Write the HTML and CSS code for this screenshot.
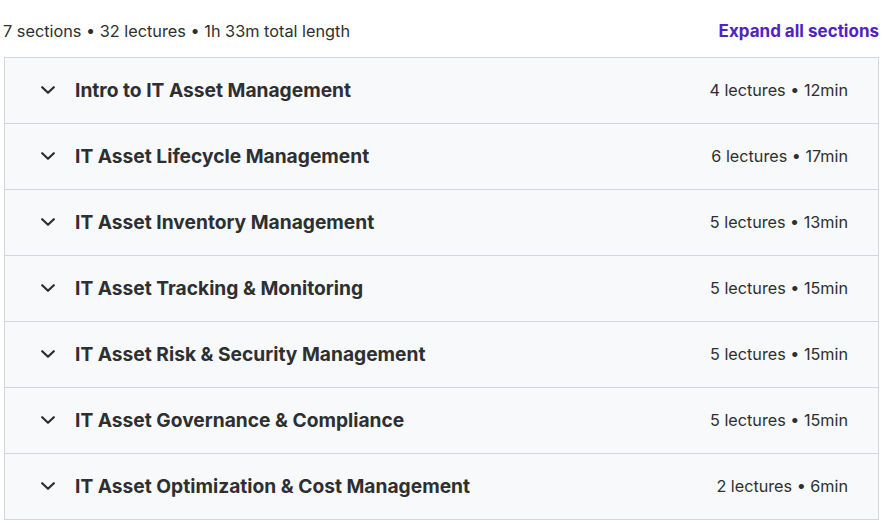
FILE: index.html
```html
<!DOCTYPE html>
<html>
<head lang="en">
    <meta charset="UTF-8">
    <title>Course content</title>
    <link rel="stylesheet" href="styles.css">
</head>
<body>
<div class="content">
    <div class="summary">
        <span class="summary-text">7 sections • 32 lectures • 1h 33m total length</span>
        <a class="expand" href="#">Expand all sections</a>
    </div>
    <div class="panel">
        <div class="section">
            <svg class="chev" viewBox="0 0 14 8"><path d="M1.2 1.2l5.8 5.6 5.8-5.6"/></svg>
            <span class="title">Intro to IT Asset Management</span>
            <span class="meta">4 lectures • 12min</span>
        </div>
        <div class="section">
            <svg class="chev" viewBox="0 0 14 8"><path d="M1.2 1.2l5.8 5.6 5.8-5.6"/></svg>
            <span class="title">IT Asset Lifecycle Management</span>
            <span class="meta">6 lectures • 17min</span>
        </div>
        <div class="section">
            <svg class="chev" viewBox="0 0 14 8"><path d="M1.2 1.2l5.8 5.6 5.8-5.6"/></svg>
            <span class="title">IT Asset Inventory Management</span>
            <span class="meta">5 lectures • 13min</span>
        </div>
        <div class="section">
            <svg class="chev" viewBox="0 0 14 8"><path d="M1.2 1.2l5.8 5.6 5.8-5.6"/></svg>
            <span class="title">IT Asset Tracking &amp; Monitoring</span>
            <span class="meta">5 lectures • 15min</span>
        </div>
        <div class="section">
            <svg class="chev" viewBox="0 0 14 8"><path d="M1.2 1.2l5.8 5.6 5.8-5.6"/></svg>
            <span class="title">IT Asset Risk &amp; Security Management</span>
            <span class="meta">5 lectures • 15min</span>
        </div>
        <div class="section">
            <svg class="chev" viewBox="0 0 14 8"><path d="M1.2 1.2l5.8 5.6 5.8-5.6"/></svg>
            <span class="title">IT Asset Governance &amp; Compliance</span>
            <span class="meta">5 lectures • 15min</span>
        </div>
        <div class="section">
            <svg class="chev" viewBox="0 0 14 8"><path d="M1.2 1.2l5.8 5.6 5.8-5.6"/></svg>
            <span class="title">IT Asset Optimization &amp; Cost Management</span>
            <span class="meta">2 lectures • 6min</span>
        </div>
    </div>
</div>
</body>
</html>
```
FILE: styles.css
```css
*{
    margin: 0;
    padding: 0;
    box-sizing: border-box;
}
html,body{
    background: #fff;
}
body{
    font-family: Inter, "Noto Sans", sans-serif;
    color: #2d2f31;
}
.content{
    width: 879px;
    padding: 19px 0 0 4px;
}
.summary{
    display: flex;
    justify-content: space-between;
    align-items: center;
    height: 24px;
    margin-bottom: 14px;
}
.summary-text{
    font-size: 16.3px;
    margin-left: -1px;
}
.expand{
    font-size: 17px;
    font-weight: 700;
    color: #5022c3;
    text-decoration: none;
}
.panel{
    border: 1px solid #d1d7dc;
    border-bottom: none;
}
.section{
    display: flex;
    align-items: center;
    height: 66px;
    padding: 0 30px 2px 36px;
    background: #f7f9fa;
    border-bottom: 1px solid #d1d7dc;
}
.chev{
    width: 14px;
    height: 8px;
    fill: none;
    stroke: #2d2f31;
    stroke-width: 2.2;
    stroke-linecap: round;
    stroke-linejoin: round;
    margin-right: 20px;
}
.title{
    flex: 1;
    font-size: 19.2px;
    font-weight: 700;
}
.meta{
    font-size: 16.2px;
    color: #2d2f31;
}
```
